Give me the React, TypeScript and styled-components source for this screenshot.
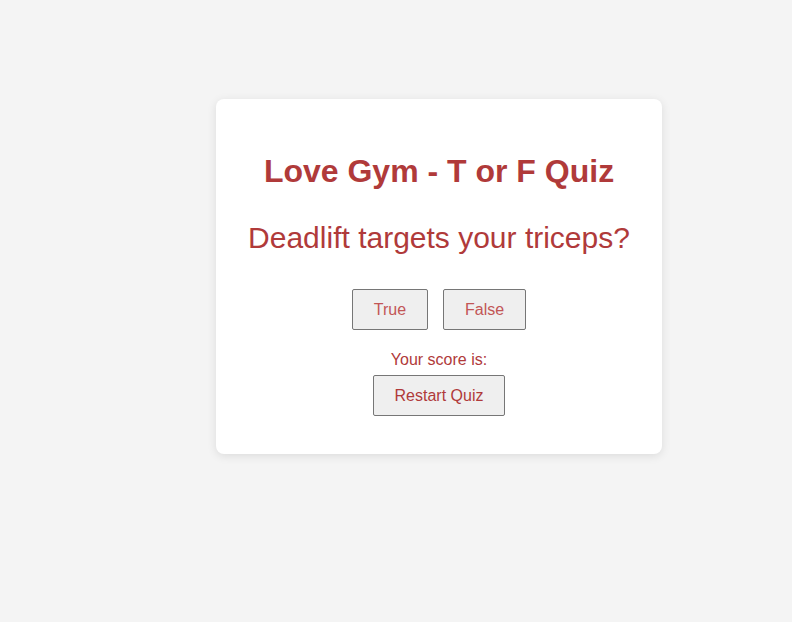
import React from "react";
import styled, { createGlobalStyle } from "styled-components";

const Global = createGlobalStyle`
  html, body { margin: 0; padding: 0; background: #f4f4f4; }
  body { font-family: "Liberation Sans", Arial, sans-serif; }
`;

const Page = styled.div`
  min-height: 622px;
  padding: 99px 0 0 216px;
  box-sizing: border-box;
`;

const Card = styled.div`
  width: 446px;
  height: 355px;
  box-sizing: border-box;
  background: #ffffff;
  border-radius: 8px;
  box-shadow: 0 2px 10px rgba(0, 0, 0, 0.1);
  padding: 54px 10px 0;
  display: flex;
  flex-direction: column;
  align-items: center;
  text-align: center;
  color: #b03a3a;
`;

const Title = styled.h1`
  margin: 0;
  font-size: 32px;
  font-weight: bold;
  line-height: 37px;
`;

const Question = styled.h2`
  margin: 30px 0 0;
  font-size: 30px;
  font-weight: normal;
  line-height: 35px;
  white-space: nowrap;
`;

const Choices = styled.div`
  display: flex;
  gap: 15px;
  margin-top: 34px;
`;

const Button = styled.button<{ $muted?: boolean }>`
  font-family: "Liberation Sans", Arial, sans-serif;
  font-size: 16px;
  color: ${(p) => (p.$muted ? "#c25656" : "#b03a3a")};
  background: #efefef;
  border: 1px solid #767676;
  border-radius: 2px;
  height: 41px;
  padding: 0 21px;
  cursor: pointer;
`;

const Score = styled.div`
  margin-top: 21px;
  font-size: 16px;
  line-height: 18px;
`;

const Restart = styled(Button)`
  margin-top: 6px;
`;

export default function App() {
  return (
    <>
      <Global />
      <Page>
        <Card>
          <Title>Love Gym - T or F Quiz</Title>
          <Question>Deadlift targets your triceps?</Question>
          <Choices>
            <Button $muted>True</Button>
            <Button $muted>False</Button>
          </Choices>
          <Score>Your score is:</Score>
          <Restart>Restart Quiz</Restart>
        </Card>
      </Page>
    </>
  );
}
